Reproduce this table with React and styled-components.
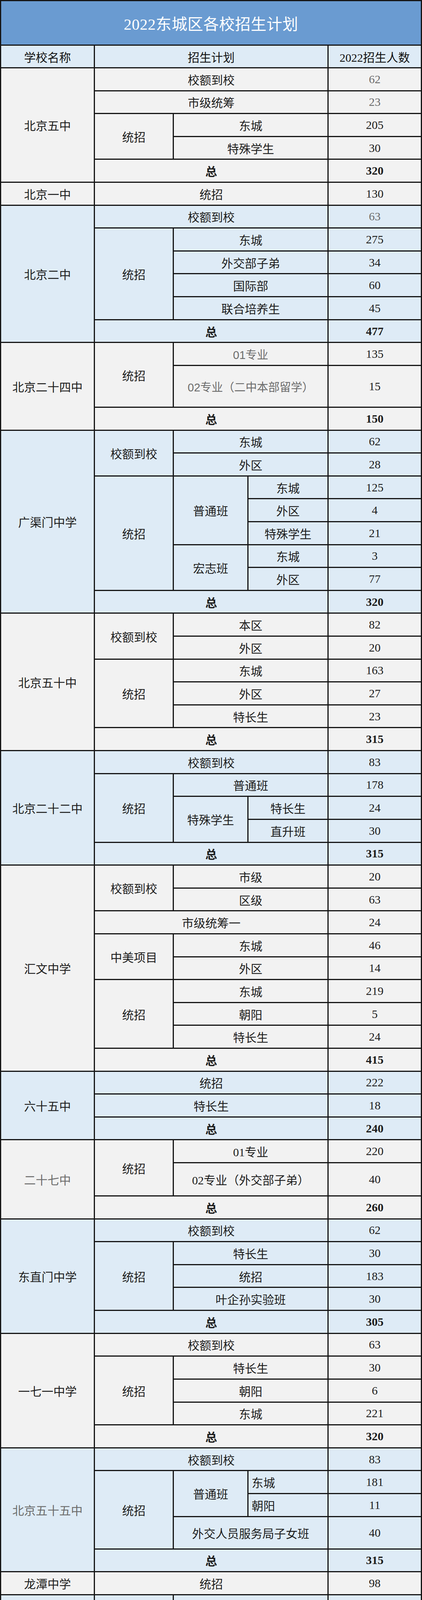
import React from "react";
import styled, { createGlobalStyle } from "styled-components";

const N = 55.62;

const GlobalStyle = createGlobalStyle`
  html, body {
    margin: 0;
    padding: 0;
    background: #ffffff;
  }
`;

const TONES = {
  gray: "#f2f2f2",
  blue: "#deebf6",
};

const Sheet = styled.div`
  width: 1080px;
  box-sizing: border-box;
  display: flex;
  flex-direction: column;
  gap: 3px;
  padding: 3px;
  background: #151515;
  font-family: "Liberation Serif", "Noto Sans CJK SC", serif;
`;

const TitleBar = styled.div`
  height: 111px;
  display: flex;
  align-items: center;
  justify-content: center;
  background: #6a9bd1;
  color: #ffffff;
  font-size: 40px;
  letter-spacing: 0.5px;
`;

const Block = styled.div`
  display: grid;
  grid-template-columns: 237px 199px 188px 202px 236px;
  grid-template-rows: ${(p) => p.$rows};
  gap: 3px;
`;

const Cell = styled.div`
  grid-column: ${(p) => p.$col};
  grid-row: ${(p) => p.$row};
  display: flex;
  align-items: center;
  justify-content: ${(p) => (p.$left ? "flex-start" : "center")};
  padding-left: ${(p) => (p.$left ? "8px" : "0")};
  background: ${(p) => TONES[p.$tone]};
  color: ${(p) => (p.$muted ? "#6b6b6b" : "#1c1c1c")};
  font-size: ${(p) => (p.$sans ? "29px" : "30px")};
  font-weight: ${(p) => (p.$bold ? 700 : 400)};
  font-family: ${(p) =>
    p.$sans
      ? `"Liberation Sans", "Noto Sans CJK SC", sans-serif`
      : `"Liberation Serif", "Noto Sans CJK SC", serif`};
  white-space: nowrap;
  overflow: hidden;
`;

const HeadCell = styled(Cell)`
  color: #111111;
`;

// [text, column, row, flags]  flags: b bold, m muted, s sans, l left
const SCHOOLS = [
  {
    name: "北京五中",
    tone: "gray",
    rows: 5,
    total: "320",
    cells: [
      ["校额到校", "2/5", "1"],
      ["62", "5", "1", "m"],
      ["市级统筹", "2/5", "2"],
      ["23", "5", "2", "m"],
      ["统招", "2/3", "3/5"],
      ["东城", "3/5", "3"],
      ["205", "5", "3"],
      ["特殊学生", "3/5", "4"],
      ["30", "5", "4"],
    ],
  },
  {
    name: "北京一中",
    tone: "gray",
    rows: 1,
    cells: [
      ["统招", "2/5", "1"],
      ["130", "5", "1"],
    ],
  },
  {
    name: "北京二中",
    tone: "blue",
    rows: 6,
    total: "477",
    cells: [
      ["校额到校", "2/5", "1"],
      ["63", "5", "1", "m"],
      ["统招", "2/3", "2/6"],
      ["东城", "3/5", "2"],
      ["275", "5", "2"],
      ["外交部子弟", "3/5", "3"],
      ["34", "5", "3"],
      ["国际部", "3/5", "4"],
      ["60", "5", "4"],
      ["联合培养生", "3/5", "5"],
      ["45", "5", "5"],
    ],
  },
  {
    name: "北京二十四中",
    tone: "gray",
    rows: 3,
    tall: { 2: 104 },
    total: "150",
    cells: [
      ["统招", "2/3", "1/3"],
      ["01专业", "3/5", "1", "ms"],
      ["135", "5", "1"],
      ["02专业（二中本部留学）", "3/5", "2", "ms"],
      ["15", "5", "2"],
    ],
  },
  {
    name: "广渠门中学",
    tone: "blue",
    rows: 8,
    total: "320",
    cells: [
      ["校额到校", "2/3", "1/3"],
      ["东城", "3/5", "1"],
      ["62", "5", "1"],
      ["外区", "3/5", "2"],
      ["28", "5", "2"],
      ["统招", "2/3", "3/8"],
      ["普通班", "3/4", "3/6"],
      ["东城", "4/5", "3"],
      ["125", "5", "3"],
      ["外区", "4/5", "4"],
      ["4", "5", "4"],
      ["特殊学生", "4/5", "5"],
      ["21", "5", "5"],
      ["宏志班", "3/4", "6/8"],
      ["东城", "4/5", "6"],
      ["3", "5", "6"],
      ["外区", "4/5", "7"],
      ["77", "5", "7"],
    ],
  },
  {
    name: "北京五十中",
    tone: "gray",
    rows: 6,
    total: "315",
    cells: [
      ["校额到校", "2/3", "1/3"],
      ["本区", "3/5", "1"],
      ["82", "5", "1"],
      ["外区", "3/5", "2"],
      ["20", "5", "2"],
      ["统招", "2/3", "3/6"],
      ["东城", "3/5", "3"],
      ["163", "5", "3"],
      ["外区", "3/5", "4"],
      ["27", "5", "4"],
      ["特长生", "3/5", "5"],
      ["23", "5", "5"],
    ],
  },
  {
    name: "北京二十二中",
    tone: "blue",
    rows: 5,
    total: "315",
    cells: [
      ["校额到校", "2/5", "1"],
      ["83", "5", "1"],
      ["统招", "2/3", "2/5"],
      ["普通班", "3/5", "2"],
      ["178", "5", "2"],
      ["特殊学生", "3/4", "3/5"],
      ["特长生", "4/5", "3"],
      ["24", "5", "3"],
      ["直升班", "4/5", "4"],
      ["30", "5", "4"],
    ],
  },
  {
    name: "汇文中学",
    tone: "gray",
    rows: 9,
    total: "415",
    cells: [
      ["校额到校", "2/3", "1/3"],
      ["市级", "3/5", "1"],
      ["20", "5", "1"],
      ["区级", "3/5", "2"],
      ["63", "5", "2"],
      ["市级统筹一", "2/5", "3"],
      ["24", "5", "3"],
      ["中美项目", "2/3", "4/6"],
      ["东城", "3/5", "4"],
      ["46", "5", "4"],
      ["外区", "3/5", "5"],
      ["14", "5", "5"],
      ["统招", "2/3", "6/9"],
      ["东城", "3/5", "6"],
      ["219", "5", "6"],
      ["朝阳", "3/5", "7"],
      ["5", "5", "7"],
      ["特长生", "3/5", "8"],
      ["24", "5", "8"],
    ],
  },
  {
    name: "六十五中",
    tone: "blue",
    rows: 3,
    total: "240",
    cells: [
      ["统招", "2/5", "1"],
      ["222", "5", "1"],
      ["特长生", "2/5", "2"],
      ["18", "5", "2"],
    ],
  },
  {
    name: "二十七中",
    tone: "gray",
    rows: 3,
    tall: { 2: 82 },
    total: "260",
    muted: true,
    cells: [
      ["统招", "2/3", "1/3"],
      ["01专业", "3/5", "1"],
      ["220", "5", "1"],
      ["02专业（外交部子弟）", "3/5", "2"],
      ["40", "5", "2"],
    ],
  },
  {
    name: "东直门中学",
    tone: "blue",
    rows: 5,
    total: "305",
    cells: [
      ["校额到校", "2/5", "1"],
      ["62", "5", "1"],
      ["统招", "2/3", "2/5"],
      ["特长生", "3/5", "2"],
      ["30", "5", "2"],
      ["统招", "3/5", "3"],
      ["183", "5", "3"],
      ["叶企孙实验班", "3/5", "4"],
      ["30", "5", "4"],
    ],
  },
  {
    name: "一七一中学",
    tone: "gray",
    rows: 5,
    total: "320",
    cells: [
      ["校额到校", "2/5", "1"],
      ["63", "5", "1"],
      ["统招", "2/3", "2/5"],
      ["特长生", "3/5", "2"],
      ["30", "5", "2"],
      ["朝阳", "3/5", "3"],
      ["6", "5", "3"],
      ["东城", "3/5", "4"],
      ["221", "5", "4"],
    ],
  },
  {
    name: "北京五十五中",
    tone: "blue",
    rows: 5,
    tall: { 4: 80 },
    total: "315",
    muted: true,
    cells: [
      ["校额到校", "2/5", "1"],
      ["83", "5", "1"],
      ["统招", "2/3", "2/5"],
      ["普通班", "3/4", "2/4"],
      ["东城", "4/5", "2", "l"],
      ["181", "5", "2"],
      ["朝阳", "4/5", "3", "l"],
      ["11", "5", "3"],
      ["外交人员服务局子女班", "3/5", "4"],
      ["40", "5", "4"],
    ],
  },
  {
    name: "龙潭中学",
    tone: "gray",
    rows: 1,
    cells: [
      ["统招", "2/5", "1"],
      ["98", "5", "1"],
    ],
  },
  {
    name: "一零九中学",
    tone: "blue",
    rows: 8,
    total: "330",
    muted: true,
    cells: [
      ["提前招生", "2/3", "1"],
      ["美术班", "3/5", "1"],
      ["85", "5", "1"],
      ["校额到校", "2/3", "2/4", "m"],
      ["本区", "3/5", "2"],
      ["82", "5", "2"],
      ["外区", "3/5", "3"],
      ["20", "5", "3"],
      ["统招", "2/3", "4/8"],
      ["小语种实验班", "3/5", "4"],
      ["30", "5", "4"],
      ["普通班", "3/4", "5/8"],
      ["特长生", "4/5", "5"],
      ["13", "5", "5"],
      ["初中部直升", "4/5", "6"],
      ["30", "5", "6"],
      ["其余", "4/5", "7"],
      ["70", "5", "7"],
    ],
  },
  {
    name: "十一中学",
    tone: "gray",
    rows: 7,
    total: "330",
    cells: [
      ["校额到校", "2/4", "1/3"],
      ["本区", "4/5", "1"],
      ["82", "5", "1"],
      ["外区", "4/5", "2"],
      ["10", "5", "2"],
      ["统招", "2/3", "3/7"],
      ["特殊学生", "3/4", "3/5"],
      ["特长生", "4/5", "3"],
      ["18", "5", "3"],
      ["直升", "4/5", "4"],
      ["26", "5", "4"],
      ["本区", "3/5", "5"],
      ["155", "5", "5"],
      ["外区", "3/5", "6"],
      ["39", "5", "6"],
    ],
  },
];

const rowTemplate = (school) =>
  Array.from({ length: school.rows }, (_, i) => {
    const h = school.tall && school.tall[i + 1];
    return `${h || N}px`;
  }).join(" ");

const SchoolBlock = ({ school }) => {
  const { name, tone, rows, total, muted, cells } = school;
  return (
    <Block $rows={rowTemplate(school)}>
      <Cell $col="1" $row={`1/${rows + 1}`} $tone={tone} $muted={muted}>
        {name}
      </Cell>
      {cells.map(([text, col, row, flags = ""], i) => (
        <Cell
          key={i}
          $col={col}
          $row={row}
          $tone={tone}
          $bold={flags.includes("b")}
          $muted={flags.includes("m")}
          $sans={flags.includes("s")}
          $left={flags.includes("l")}
        >
          {text}
        </Cell>
      ))}
      {total && (
        <>
          <Cell $col="2/5" $row={`${rows}`} $tone={tone} $bold>
            总
          </Cell>
          <Cell $col="5" $row={`${rows}`} $tone={tone} $bold>
            {total}
          </Cell>
        </>
      )}
    </Block>
  );
};

export default function App() {
  return (
    <>
      <GlobalStyle />
      <Sheet>
        <TitleBar>2022东城区各校招生计划</TitleBar>
        <Block $rows="55px">
          <HeadCell $col="1" $row="1" $tone="blue">
            学校名称
          </HeadCell>
          <HeadCell $col="2/5" $row="1" $tone="blue">
            招生计划
          </HeadCell>
          <HeadCell $col="5" $row="1" $tone="blue">
            2022招生人数
          </HeadCell>
        </Block>
        {SCHOOLS.map((s) => (
          <SchoolBlock key={s.name} school={s} />
        ))}
      </Sheet>
    </>
  );
}
